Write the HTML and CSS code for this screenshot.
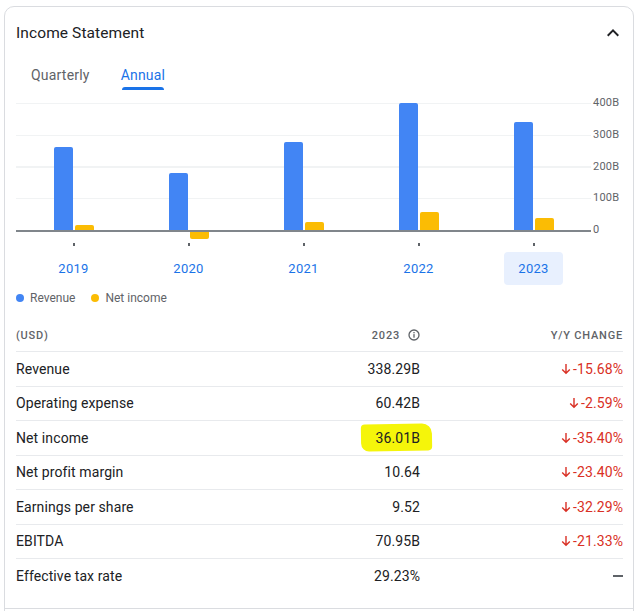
FILE: index.html
```html
<!DOCTYPE html>
<html lang="en">
<head>
<meta charset="utf-8">
<title>Income Statement</title>
<link rel="stylesheet" href="styles.css">
</head>
<body>
<section class="card">
  <div class="inner">
    <header class="head">
      <h2 class="title">Income Statement</h2>
      <button class="collapse" aria-label="Collapse">
        <svg width="24" height="24" viewBox="0 0 24 24"><path d="M12 8l-6 6 1.41 1.41L12 10.83l4.59 4.58L18 14z" fill="#202124"/></svg>
      </button>
    </header>

    <nav class="tabs">
      <span class="tab">Quarterly</span>
      <span class="tab active">Annual</span>
    </nav>

    <div class="chart">
      <div class="plot">
        <div class="group"><div class="bar rev" style="height:83px"></div><div class="bar net" style="height:5px"></div></div>
        <div class="group"><div class="bar rev" style="height:57px"></div><div class="bar net neg" style="height:7px"></div></div>
        <div class="group"><div class="bar rev" style="height:88px"></div><div class="bar net" style="height:8px"></div></div>
        <div class="group"><div class="bar rev" style="height:127px"></div><div class="bar net" style="height:18px"></div></div>
        <div class="group"><div class="bar rev" style="height:108px"></div><div class="bar net" style="height:12px"></div></div>
      </div>
      <div class="yaxis">
        <span>400B</span><span>300B</span><span>200B</span><span>100B</span><span>0</span>
      </div>
    </div>

    <div class="ticks">
      <span></span><span></span><span></span><span></span><span></span>
    </div>

    <div class="years">
      <div class="ycell"><span class="year">2019</span></div>
      <div class="ycell"><span class="year">2020</span></div>
      <div class="ycell"><span class="year">2021</span></div>
      <div class="ycell"><span class="year">2022</span></div>
      <div class="ycell"><span class="year selected">2023</span></div>
    </div>

    <div class="legend">
      <span class="item"><i class="dot blue"></i>Revenue</span>
      <span class="item"><i class="dot yellow"></i>Net income</span>
    </div>

    <div class="table">
      <div class="row header">
        <span class="label">(USD)</span>
        <span class="value">2023
          <svg class="info" width="12" height="12" viewBox="0 0 12 12"><circle cx="6" cy="6" r="5" fill="none" stroke="#5f6368" stroke-width="1.3"/><rect x="5.35" y="5.1" width="1.3" height="3.6" fill="#5f6368"/><rect x="5.35" y="3" width="1.3" height="1.3" fill="#5f6368"/></svg>
        </span>
        <span class="change">Y/Y change</span>
      </div>
      <div class="row"><span class="label">Revenue</span><span class="value">338.29B</span><span class="change down"><svg class="arrow" viewBox="0 0 10 12"><path d="M5 1v9M1.2 6.5L5 10.3 8.8 6.5" fill="none" stroke="currentColor" stroke-width="1.4"/></svg>-15.68%</span></div>
      <div class="row"><span class="label">Operating expense</span><span class="value">60.42B</span><span class="change down"><svg class="arrow" viewBox="0 0 10 12"><path d="M5 1v9M1.2 6.5L5 10.3 8.8 6.5" fill="none" stroke="currentColor" stroke-width="1.4"/></svg>-2.59%</span></div>
      <div class="row"><span class="label">Net income</span><span class="value"><mark class="hl">36.01B</mark></span><span class="change down"><svg class="arrow" viewBox="0 0 10 12"><path d="M5 1v9M1.2 6.5L5 10.3 8.8 6.5" fill="none" stroke="currentColor" stroke-width="1.4"/></svg>-35.40%</span></div>
      <div class="row"><span class="label">Net profit margin</span><span class="value">10.64</span><span class="change down"><svg class="arrow" viewBox="0 0 10 12"><path d="M5 1v9M1.2 6.5L5 10.3 8.8 6.5" fill="none" stroke="currentColor" stroke-width="1.4"/></svg>-23.40%</span></div>
      <div class="row"><span class="label">Earnings per share</span><span class="value">9.52</span><span class="change down"><svg class="arrow" viewBox="0 0 10 12"><path d="M5 1v9M1.2 6.5L5 10.3 8.8 6.5" fill="none" stroke="currentColor" stroke-width="1.4"/></svg>-32.29%</span></div>
      <div class="row"><span class="label">EBITDA</span><span class="value">70.95B</span><span class="change down"><svg class="arrow" viewBox="0 0 10 12"><path d="M5 1v9M1.2 6.5L5 10.3 8.8 6.5" fill="none" stroke="currentColor" stroke-width="1.4"/></svg>-21.33%</span></div>
      <div class="row last"><span class="label">Effective tax rate</span><span class="value">29.23%</span><span class="change"><i class="dash"></i></span></div>
    </div>
  </div>
  <div class="footer"></div>
</section>
</body>
</html>
```

FILE: styles.css
```css
html, body {
  margin: 0;
  padding: 0;
  overflow: hidden;
  background: #ffffff;
}

body {
  font-family: Roboto, "Liberation Sans", Arial, sans-serif;
  color: #202124;
  padding: 6px 6px 0 4px;
}

.card {
  width: 630px;
  box-sizing: border-box;
  border: 1px solid #dadce0;
  border-radius: 10px 10px 0 0;
}

.inner {
  padding: 0 10px 0 11px;
}

.head {
  display: flex;
  align-items: center;
  justify-content: space-between;
  height: 50px;
  padding-top: 1px;
}

.title {
  margin: 0;
  font-size: 15.5px;
  font-weight: 400;
  line-height: 24px;
  letter-spacing: 0.1px;
}

.collapse {
  border: 0;
  background: none;
  padding: 0;
  margin-right: -2px;
  width: 24px;
  height: 24px;
  display: flex;
}

.tabs {
  display: flex;
  padding-top: 7px;
}

.tab {
  display: inline-flex;
  flex-direction: column;
  align-items: center;
  padding: 0 15px;
  font-size: 14px;
  line-height: 20px;
  color: #5f6368;
  letter-spacing: 0.2px;
}

.tab::after {
  content: "";
  display: block;
  align-self: stretch;
  height: 3px;
  margin: 2px 1px 0;
  border-radius: 3px 3px 0 0;
  background: transparent;
}

.tab.active {
  color: #1a73e8;
  padding-left: 16px;
}

.tab.active::after {
  background: #1a73e8;
}

.chart {
  display: flex;
  align-items: flex-start;
  margin-top: 13px;
}

.plot {
  width: 575px;
  height: 127px;
  flex: none;
  display: grid;
  grid-template-columns: repeat(5, 115px);
  border-bottom: 2px solid #80868b;
  background: repeating-linear-gradient(to bottom, #f1f3f4 0, #f1f3f4 1px, transparent 1px, transparent 31.75px);
}

.group {
  display: flex;
  justify-content: center;
  align-items: flex-end;
  gap: 2px;
  padding-left: 1px;
}

.bar {
  width: 19px;
  border-radius: 2px 2px 0 0;
}

.bar.rev { background: #4285f4; }
.bar.net { background: #fbbc04; }

.bar.neg {
  align-self: flex-end;
  transform: translateY(calc(100% + 2px));
  border-radius: 0 0 2px 2px;
}

.yaxis {
  display: flex;
  flex-direction: column;
  margin: -16px 0 -16px 2px;
}

.yaxis span {
  height: 31.75px;
  line-height: 31.75px;
  font-size: 11px;
  color: #5f6368;
  letter-spacing: 0.2px;
}

.ticks {
  display: grid;
  grid-template-columns: repeat(5, 115px);
  margin-top: 11px;
  height: 3px;
}

.ticks span {
  width: 2px;
  height: 3px;
  background: #5f6368;
  justify-self: center;
  margin-left: 1px;
}

.years {
  display: grid;
  grid-template-columns: repeat(5, 115px);
  margin-top: 6px;
}

.ycell {
  display: flex;
  justify-content: center;
}

.year {
  height: 33px;
  line-height: 33px;
  padding: 0 14px;
  border-radius: 4px;
  font-size: 13px;
  color: #1a73e8;
  letter-spacing: 0.3px;
}

.year.selected {
  background: #e8f0fe;
}

.legend {
  display: flex;
  gap: 16px;
  margin-top: 6px;
  height: 14px;
  align-items: center;
  font-size: 12px;
  color: #5f6368;
}

.item {
  display: flex;
  align-items: center;
  gap: 6px;
}

.dot {
  width: 8px;
  height: 8px;
  border-radius: 50%;
  display: inline-block;
}

.dot.blue { background: #4285f4; }
.dot.yellow { background: #fbbc04; }

.table {
  margin-top: 14px;
}

.row {
  display: grid;
  grid-template-columns: 1fr 200px 203px;
  align-items: center;
  height: 34.5px;
  box-sizing: border-box;
  border-bottom: 1px solid #e8eaed;
  font-size: 14px;
  letter-spacing: 0.1px;
}

.row.last {
  border-bottom: 0;
}

.row.header {
  height: 33px;
  font-size: 11px;
  font-weight: 500;
  color: #5f6368;
  letter-spacing: 0.8px;
}

.row.header .change {
  text-transform: uppercase;
}

.value, .change {
  text-align: right;
  display: flex;
  justify-content: flex-end;
  align-items: center;
}

.row.header .value {
  gap: 8px;
}

.info {
  display: block;
}

.change.down {
  color: #d93025;
  gap: 2px;
}

.arrow {
  width: 10px;
  height: 12px;
  display: block;
}

.hl {
  position: relative;
  background: transparent;
  color: inherit;
  z-index: 0;
}

.hl::before {
  content: "";
  position: absolute;
  left: -15px;
  right: -11px;
  top: -6px;
  bottom: -5px;
  background: #f5f50a;
  border-radius: 4px 10px 4px 8px;
  transform: rotate(-1deg);
  z-index: -1;
}

.dash {
  display: block;
  width: 10px;
  height: 2px;
  background: #5f6368;
}

.footer {
  margin-top: 14px;
  border-top: 1px solid #dadce0;
  height: 40px;
}
```
